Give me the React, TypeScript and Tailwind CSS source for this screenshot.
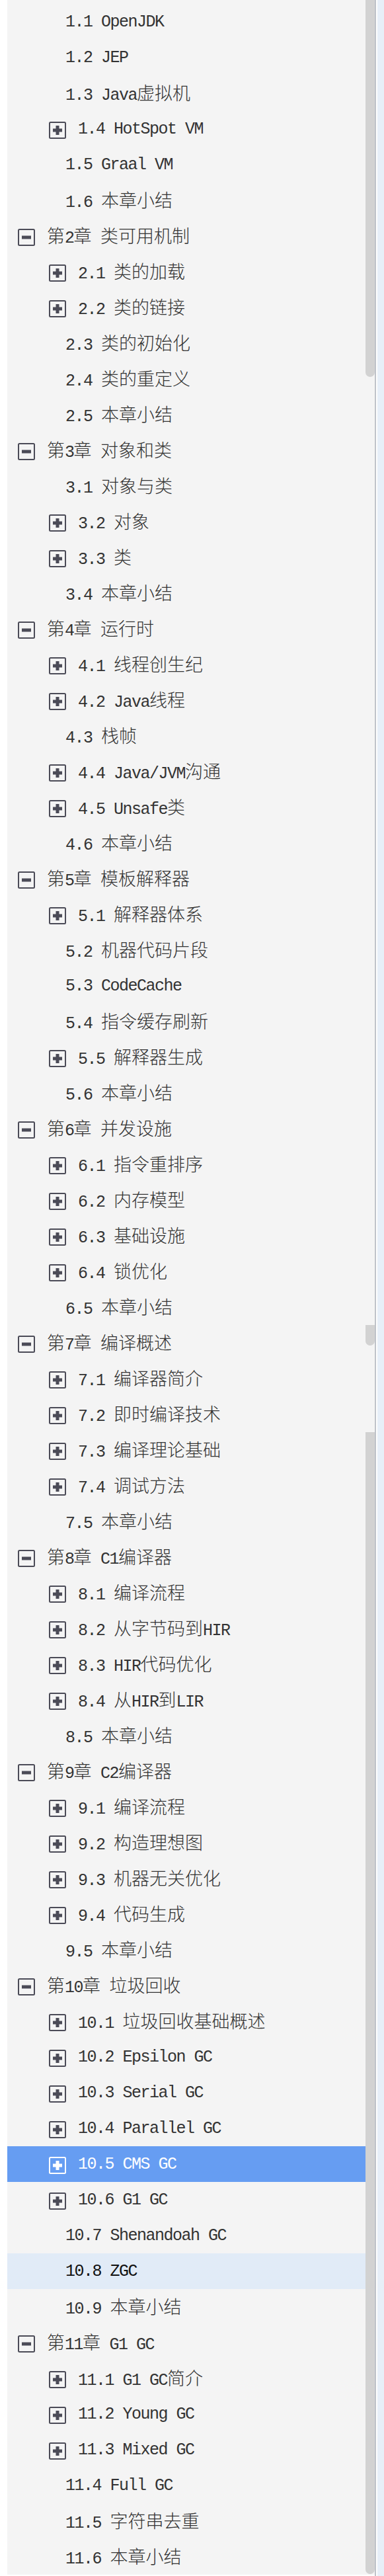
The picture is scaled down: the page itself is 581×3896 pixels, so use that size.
const toc = [
  "1.1 OpenJDK",
  "1.2 JEP",
  "1.3 Java虚拟机",
  "+1.4 HotSpot VM",
  "1.5 Graal VM",
  "1.6 本章小结",
  "-第2章 类可用机制",
  "+2.1 类的加载",
  "+2.2 类的链接",
  "2.3 类的初始化",
  "2.4 类的重定义",
  "2.5 本章小结",
  "-第3章 对象和类",
  "3.1 对象与类",
  "+3.2 对象",
  "+3.3 类",
  "3.4 本章小结",
  "-第4章 运行时",
  "+4.1 线程创生纪",
  "+4.2 Java线程",
  "4.3 栈帧",
  "+4.4 Java/JVM沟通",
  "+4.5 Unsafe类",
  "4.6 本章小结",
  "-第5章 模板解释器",
  "+5.1 解释器体系",
  "5.2 机器代码片段",
  "5.3 CodeCache",
  "5.4 指令缓存刷新",
  "+5.5 解释器生成",
  "5.6 本章小结",
  "-第6章 并发设施",
  "+6.1 指令重排序",
  "+6.2 内存模型",
  "+6.3 基础设施",
  "+6.4 锁优化",
  "6.5 本章小结",
  "-第7章 编译概述",
  "+7.1 编译器简介",
  "+7.2 即时编译技术",
  "+7.3 编译理论基础",
  "+7.4 调试方法",
  "7.5 本章小结",
  "-第8章 C1编译器",
  "+8.1 编译流程",
  "+8.2 从字节码到HIR",
  "+8.3 HIR代码优化",
  "+8.4 从HIR到LIR",
  "8.5 本章小结",
  "-第9章 C2编译器",
  "+9.1 编译流程",
  "+9.2 构造理想图",
  "+9.3 机器无关优化",
  "+9.4 代码生成",
  "9.5 本章小结",
  "-第10章 垃圾回收",
  "+10.1 垃圾回收基础概述",
  "+10.2 Epsilon GC",
  "+10.3 Serial GC",
  "+10.4 Parallel GC",
  "+10.5 CMS GC",
  "+10.6 G1 GC",
  "10.7 Shenandoah GC",
  "10.8 ZGC",
  "10.9 本章小结",
  "-第11章 G1 GC",
  "+11.1 G1 GC简介",
  "+11.2 Young GC",
  "+11.3 Mixed GC",
  "11.4 Full GC",
  "11.5 字符串去重",
  "11.6 本章小结",
];

const SELECTED = "10.5 CMS GC";
const HOVERED = "10.8 ZGC";

function ToggleBox({ open, light }: { open: boolean; light?: boolean }) {
  const c = light ? "#ffffff" : "#4b4b57";
  return (
    <svg width="26" height="26" viewBox="0 0 26 26" className="mt-[4px] shrink-0">
      <rect x="1" y="1" width="24" height="24" rx="1.5" fill="none" stroke={c} strokeWidth="2" />
      <rect x="6" y="10.5" width="14" height="5" fill={c} />
      {!open && <rect x="10.5" y="6" width="5" height="14" fill={c} />}
    </svg>
  );
}

function Label({ text }: { text: string }) {
  const parts = text.split(/([\u3000-\u9fff\uff00-\uffef]+)/).filter(Boolean);
  return (
    <span className="whitespace-pre leading-none">
      {parts.map((p, i) =>
        /[\u3000-\u9fff\uff00-\uffef]/.test(p) ? (
          <span key={i} className="font-['Noto_Sans_CJK_SC',sans-serif] text-[27px] font-light">
            {p}
          </span>
        ) : (
          <span key={i} className="font-['Liberation_Mono',monospace] text-[25px] tracking-[-1.5px]">
            {p}
          </span>
        )
      )}
    </span>
  );
}

function Row({ line }: { line: string }) {
  const chapter = line.startsWith("-");
  const branch = line.startsWith("+");
  const text = chapter || branch ? line.slice(1) : line;
  const selected = text === SELECTED;
  const hovered = text === HOVERED;

  return (
    <div
      className={
        "flex h-[54px] items-center " +
        (selected
          ? "bg-[#669df2] text-white "
          : hovered
          ? "bg-[#e1ebf7] text-[#111] "
          : "text-[#333] ") +
        (chapter ? "gap-[18px] pl-[16px]" : branch ? "gap-[18px] pl-[63px]" : "pl-[88px]")
      }
    >
      {(chapter || branch) && <ToggleBox open={chapter} light={selected} />}
      <Label text={text} />
    </div>
  );
}

export default function App() {
  return (
    <div className="flex h-[3896px] w-[581px] bg-white">
      <div className="ml-[11px] flex h-[3894px] w-[556px] bg-[#f4f4f4]">
        <div className="w-[542px] pt-[6px]">
          {toc.map((line) => (
            <Row key={line} line={line} />
          ))}
        </div>
        <div className="relative w-[14px]">
          <div className="absolute left-0 top-0 h-[570px] w-[14px] rounded-b-[7px] bg-[#d2d2d2]" />
          <div className="absolute left-0 top-[2004px] h-[31px] w-[14px] rounded-b-[7px] bg-[#d2d2d2]" />
          <div className="absolute left-0 top-[2166px] h-[1727px] w-[14px] rounded-b-[7px] bg-[#d2d2d2]" />
        </div>
      </div>
      <div className="w-[2px] bg-[#bfc3c9]" />
      <div className="w-[2px] bg-white" />
      <div className="w-[10px] bg-[#e7eff8]" />
    </div>
  );
}
